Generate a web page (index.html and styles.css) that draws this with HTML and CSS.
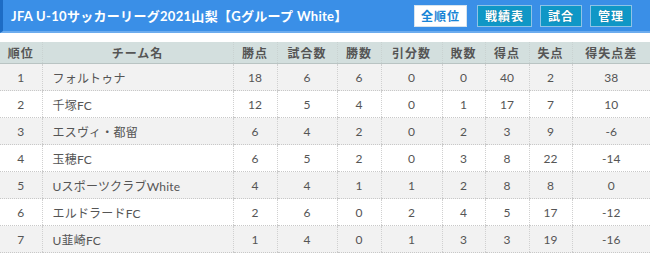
FILE: index.html
```html
<!DOCTYPE html>
<html lang="ja">
<head>
<meta charset="utf-8">
<link rel="stylesheet" href="styles.css">
</head>
<body>
<div class="bar">
  <h1 class="title">JFA U-10サッカーリーグ2021山梨【Gグループ White】</h1>
  <nav class="buttons">
    <span class="btn active">全順位</span>
    <span class="btn">戦績表</span>
    <span class="btn">試合</span>
    <span class="btn">管理</span>
  </nav>
</div>
<table class="standings">
  <colgroup>
    <col class="c-rank"><col class="c-team"><col class="c-pts"><col class="c-gp"><col class="c-w"><col class="c-d"><col class="c-l"><col class="c-gf"><col class="c-ga"><col class="c-gd">
  </colgroup>
  <thead>
    <tr><th>順位</th><th>チーム名</th><th>勝点</th><th>試合数</th><th>勝数</th><th>引分数</th><th>敗数</th><th>得点</th><th>失点</th><th>得失点差</th></tr>
  </thead>
  <tbody>
    <tr><td>1</td><td class="team">フォルトゥナ</td><td>18</td><td>6</td><td>6</td><td>0</td><td>0</td><td>40</td><td>2</td><td>38</td></tr>
    <tr><td>2</td><td class="team">千塚FC</td><td>12</td><td>5</td><td>4</td><td>0</td><td>1</td><td>17</td><td>7</td><td>10</td></tr>
    <tr><td>3</td><td class="team">エスヴィ・都留</td><td>6</td><td>4</td><td>2</td><td>0</td><td>2</td><td>3</td><td>9</td><td>-6</td></tr>
    <tr><td>4</td><td class="team">玉穂FC</td><td>6</td><td>5</td><td>2</td><td>0</td><td>3</td><td>8</td><td>22</td><td>-14</td></tr>
    <tr><td>5</td><td class="team">UスポーツクラブWhite</td><td>4</td><td>4</td><td>1</td><td>1</td><td>2</td><td>8</td><td>8</td><td>0</td></tr>
    <tr><td>6</td><td class="team">エルドラードFC</td><td>2</td><td>6</td><td>0</td><td>2</td><td>4</td><td>5</td><td>17</td><td>-12</td></tr>
    <tr><td>7</td><td class="team">U韮崎FC</td><td>1</td><td>4</td><td>0</td><td>1</td><td>3</td><td>3</td><td>19</td><td>-16</td></tr>
  </tbody>
</table>
</body>
</html>
```
FILE: styles.css
```css
html, body {
  margin: 0;
  padding: 0;
  background: #fff;
  font-family: Lato, "Noto Sans CJK JP", sans-serif;
}
.bar {
  display: flex;
  align-items: center;
  height: 31px;
  background: #3a8fe7;
  border-left: 3px solid #1d6cc4;
  border-bottom: 2px solid #6cacee;
  padding: 0 18px 0 8px;
  box-sizing: content-box;
}
.title {
  margin: 0;
  color: #fff;
  font-size: 13px;
  font-weight: bold;
  letter-spacing: 0.3px;
}
.buttons {
  margin-left: auto;
  display: flex;
  gap: 8px;
}
.btn {
  display: flex;
  align-items: center;
  justify-content: center;
  height: 20px;
  padding: 0 7px;
  border: 1px solid #8fc3e6;
  background: #0f97c6;
  color: #fff;
  font-size: 12px;
  font-weight: bold;
  letter-spacing: 1px;
  text-shadow: 0 0 1px rgba(0,0,0,0.3);
}
.btn.active {
  background: #fff;
  color: #1784d6;
  border-color: #d6e4ee;
  padding: 0 6px;
  margin-right: 2px;
  text-shadow: none;
}
.standings {
  margin-top: 9px;
  width: 650px;
  border-collapse: collapse;
  table-layout: fixed;
  font-size: 12px;
  color: #555;
}
.c-rank { width: 42px; }
.c-team { width: 191px; }
.c-pts { width: 44px; }
.c-gp { width: 60px; }
.c-w { width: 44px; }
.c-d { width: 61px; }
.c-l { width: 43px; }
.c-gf { width: 44px; }
.c-ga { width: 43px; }
.c-gd { width: 78px; }
.standings th {
  height: 21px;
  background: #d3dfde;
  color: #555;
  font-weight: bold;
  letter-spacing: 1px;
  border-bottom: 1px solid #b9c4c3;
  border-left: 1px dotted #c9d2d1;
  padding: 0;
}
.standings td {
  height: 26px;
  text-align: center;
  padding: 0;
  border-bottom: 1px dotted #c8c8c8;
  border-left: 1px dotted #d0d0d0;
}
.standings th:first-child, .standings td:first-child {
  border-left: none;
}
.standings td.team {
  text-align: left;
  padding-left: 10px;
  letter-spacing: 0.2px;
}
.standings tbody tr:nth-child(odd) td {
  background: #f2f2f2;
}
```
